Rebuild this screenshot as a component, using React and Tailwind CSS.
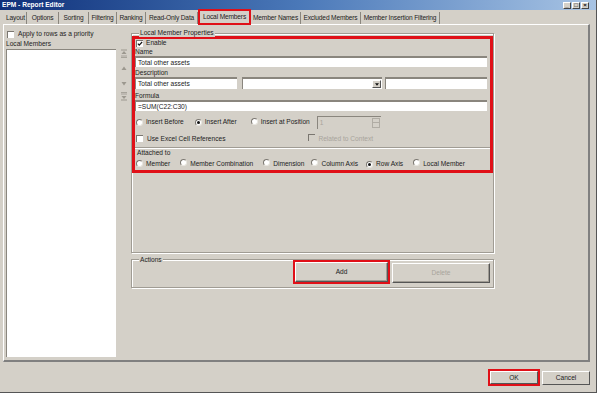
import React from 'react'

const font = { fontFamily: '"Liberation Sans", Arial, sans-serif' }

function Check({ checked, disabled }) {
    return (
        <span className={"inline-block w-[7px] h-[7px] border-t border-l border-[#7a7670] border-b-white border-r-white shrink-0 relative " + (disabled ? "bg-[#d4d0c8]" : "bg-white")}>
            {checked && (
                <svg viewBox="0 0 7 7" className="absolute left-0 top-0 w-[6px] h-[6px]">
                    <path d="M1 3 L2.6 4.8 L6 1.2" stroke="#111" strokeWidth="1.4" fill="none" />
                </svg>
            )}
        </span>
    )
}

function Radio({ checked }) {
    return (
        <span className="inline-flex items-center justify-center w-[7px] h-[7px] rounded-full bg-white border border-t-[#7a7670] border-l-[#7a7670] border-b-[#e8e6e0] border-r-[#e8e6e0] shrink-0">
            {checked && <span className="w-[3px] h-[3px] rounded-full bg-[#111]" />}
        </span>
    )
}

function Field({ w, h = 11, text, children }) {
    return (
        <div className={"bg-white border-t-2 border-l border-[#8a867e] border-b-white border-r-white flex items-center pl-[2px] shrink-0 " + w + " " + (h === 12 ? "h-[12px]" : "h-[11px]")}>
            <span className="text-[#222]">{text}</span>
            {children}
        </div>
    )
}

function Btn({ label, w, disabled }) {
    return (
        <div className={"h-[20px] flex items-center justify-center bg-[#d4d0c8] border border-t-white border-l-white border-b-[#555] border-r-[#555] shadow-[inset_-1px_-1px_0_#a09c94] " + w + (disabled ? " text-[#a8a49c]" : " text-[#222]")}>
            {label}
        </div>
    )
}

function Arrow({ kind }) {
    const stroke = "#9c988f"
    return (
        <svg viewBox="0 0 6 9" className="w-[6px] h-[9px]">
            {kind === "top" && <>
                <path d="M0 1 H6" stroke={stroke} />
                <path d="M3 2 L0.5 5 H5.5 Z" fill={stroke} />
                <path d="M0 7 H6 M0 8.5 H6" stroke={stroke} strokeWidth="0.8" />
            </>}
            {kind === "up" && <path d="M3 2.5 L0.5 6 H5.5 Z" fill={stroke} />}
            {kind === "down" && <path d="M3 6.5 L0.5 3 H5.5 Z" fill={stroke} />}
            {kind === "bottom" && <>
                <path d="M0 0.5 H6 M0 2 H6" stroke={stroke} strokeWidth="0.8" />
                <path d="M3 7 L0.5 4 H5.5 Z" fill={stroke} />
                <path d="M0 8 H6" stroke={stroke} />
            </>}
        </svg>
    )
}

const tabs = [
    ["Layout", "w-[22px]"],
    ["Options", "w-[32px]"],
    ["Sorting", "w-[30px]"],
    ["Filtering", "w-[28px]"],
    ["Ranking", "w-[29px]"],
    ["Read-Only Data", "w-[52px]"],
    ["Local Members", "w-[53px]", true],
    ["Member Names", "w-[50px]"],
    ["Excluded Members", "w-[60px]"],
    ["Member Insertion Filtering", "w-[79px]"],
]

export default function App() {
    return (
        <div style={font} className="w-[597px] h-[393px] overflow-hidden bg-[#d4d0c8] text-[6.6px] leading-[8px] text-[#222] flex flex-col border-r border-b border-[#555]">
            {/* title bar */}
            <div className="h-[10px] shrink-0 flex items-center justify-between bg-linear-to-r from-[#10307a] via-[#4a78b8] to-[#a8c4e4] pl-[2px] pr-[7px]">
                <span className="text-white font-bold text-[6.6px]">EPM - Report Editor</span>
                <div className="flex gap-[1px]">
                    {["_", "□", "×"].map((g, i) => (
                        <span key={i} className="w-[8px] h-[7px] bg-[#d4d0c8] border border-t-white border-l-white border-b-[#444] border-r-[#444] flex items-center justify-center text-[6px] leading-[6px] font-bold text-black">{g}</span>
                    ))}
                </div>
            </div>

            {/* tab strip */}
            <div className="h-[14px] shrink-0 flex items-end pl-[5px] tracking-[-0.15px]">
                {tabs.map(([name, w, active]) => (
                    active ? (
                        <div key={name} className={"h-[16px] -mb-[1px] flex items-center justify-center border-2 border-[#e01018] bg-[#d4d0c8] z-10 whitespace-nowrap " + w}>
                            {name}
                        </div>
                    ) : (
                        <div key={name} className={"h-[12px] flex items-center justify-center border-r border-[#8a867e] whitespace-nowrap " + w}>
                            {name}
                        </div>
                    )
                ))}
            </div>

            {/* tab page */}
            <div className="ml-[3px] mr-[6px] h-[338px] shrink-0 border-t border-l border-white border-r-2 border-b-2 border-r-[#808080] border-b-[#808080] flex">
                {/* left column */}
                <div className="ml-[2px] w-[110px] flex flex-col">
                    <div className="mt-[5px] flex items-center gap-[4px] ml-[1px]">
                        <Check />
                        <span>Apply to rows as a priority</span>
                    </div>
                    <span className="mt-[2px]">Local Members</span>
                    <div className="mt-[1px] h-[308px] bg-white border-t border-l border-[#8a867e] border-b-white border-r-white" />
                </div>

                {/* move buttons */}
                <div className="ml-[4px] w-[8px] flex flex-col items-center">
                    <div className="mt-[24px]"><Arrow kind="top" /></div>
                    <div className="mt-[6px]"><Arrow kind="up" /></div>
                    <div className="mt-[6px]"><Arrow kind="down" /></div>
                    <div className="mt-[4px]"><Arrow kind="bottom" /></div>
                </div>

                {/* right column */}
                <div className="ml-[3px] w-[363px] flex flex-col">
                    <div className="mt-[8px] h-[220px] relative border border-[#a09c94] shadow-[inset_1px_1px_0_#fff,1px_1px_0_#fff] flex flex-col">
                        <span className="absolute left-[7px] -top-[5px] px-[1px] bg-[#d4d0c8]">Local Member Properties</span>
                        <div className="mt-[2px] border-[3px] border-[#e01018] flex flex-col pb-[2px]">
                            <div className="flex items-center gap-[3px] pl-[1px]">
                                <Check checked />
                                <span>Enable</span>
                            </div>
                            <span className="mt-[1px]">Name</span>
                            <Field w="w-[352px]" text="Total other assets" />
                            <span className="mt-[2px]">Description</span>
                            <div className="flex">
                                <Field w="w-[102px]" h={12} text="Total other assets" />
                                <div className="ml-[5px] w-[140px] h-[12px] bg-white border-t-2 border-l border-[#8a867e] border-b-white border-r-white flex justify-end items-center pr-[1px]">
                                    <span className="w-[9px] h-[8px] bg-[#d4d0c8] border border-t-white border-l-white border-b-[#555] border-r-[#555] flex items-center justify-center">
                                        <svg viewBox="0 0 5 3" className="w-[4px] h-[3px]"><path d="M0 0 H5 L2.5 3 Z" fill="#111" /></svg>
                                    </span>
                                </div>
                                <Field w="ml-[3px] w-[102px]" h={12} text="" />
                            </div>
                            <span className="mt-[3px]">Formula</span>
                            <Field w="w-[352px]" text="=SUM(C22:C30)" />
                            <div className="mt-[4px] h-[14px] flex items-center pl-[1px]">
                                <Radio />
                                <span className="ml-[3px]">Insert Before</span>
                                <span className="ml-[11px]"><Radio checked /></span>
                                <span className="ml-[3px]">Insert After</span>
                                <span className="ml-[14px]"><Radio /></span>
                                <span className="ml-[3px]">Insert at Position</span>
                                <div className="ml-[7px] w-[64px] h-[13px] border-t border-l border-[#8a867e] border-b-white border-r-white bg-[#d4d0c8] flex items-center justify-between pl-[2px] pr-[1px] text-[#a8a49c]">
                                    <span>1</span>
                                    <span className="w-[8px] h-[10px] flex flex-col border border-[#b0aca4]">
                                        <span className="flex-1 border-b border-[#b0aca4]" />
                                        <span className="flex-1" />
                                    </span>
                                </div>
                            </div>
                            <div className="mt-[5px] flex items-center pl-[1px]">
                                <Check />
                                <span className="ml-[4px]">Use Excel Cell References</span>
                                <span className="ml-[83px]"><Check disabled /></span>
                                <span className="ml-[3px] text-[#a8a49c]">Related to Context</span>
                            </div>
                            <div className="mt-[4px] h-[2px] border-t border-[#a09c94] border-b border-b-white" />
                            <span className="pl-[2px]">Attached to</span>
                            <div className="mt-[2px] flex items-center pl-[1px]">
                                <Radio />
                                <span className="ml-[3px]">Member</span>
                                <span className="ml-[10px]"><Radio /></span>
                                <span className="ml-[3px]">Member Combination</span>
                                <span className="ml-[10px]"><Radio /></span>
                                <span className="ml-[3px]">Dimension</span>
                                <span className="ml-[7px]"><Radio /></span>
                                <span className="ml-[3px]">Column Axis</span>
                                <span className="ml-[8px]"><Radio checked /></span>
                                <span className="ml-[3px]">Row Axis</span>
                                <span className="ml-[10px]"><Radio /></span>
                                <span className="ml-[3px]">Local Member</span>
                            </div>
                        </div>
                    </div>

                    <div className="mt-[6px] h-[29px] relative border border-[#a09c94] shadow-[inset_1px_1px_0_#fff,1px_1px_0_#fff] flex items-end justify-end pr-[3px] pb-[3px]">
                        <span className="absolute left-[7px] -top-[4px] px-[1px] bg-[#d4d0c8]">Actions</span>
                        <div className="border-2 border-[#e01018]">
                            <Btn label="Add" w="w-[93px]" />
                        </div>
                        <div className="ml-[2px] mb-[1px]">
                            <Btn label="Delete" w="w-[98px]" disabled />
                        </div>
                    </div>
                </div>
            </div>

            {/* dialog buttons */}
            <div className="mt-[7px] flex justify-end pr-[6px]">
                <div className="border-2 border-[#e01018]">
                    <div className="h-[13px] w-[48px] flex items-center justify-center border border-t-white border-l-white border-b-[#555] border-r-[#555]">OK</div>
                </div>
                <div className="ml-[2px] mt-[2px] h-[14px] w-[48px] flex items-center justify-center border border-t-white border-l-white border-b-[#555] border-r-[#555]">Cancel</div>
            </div>
        </div>
    )
}
